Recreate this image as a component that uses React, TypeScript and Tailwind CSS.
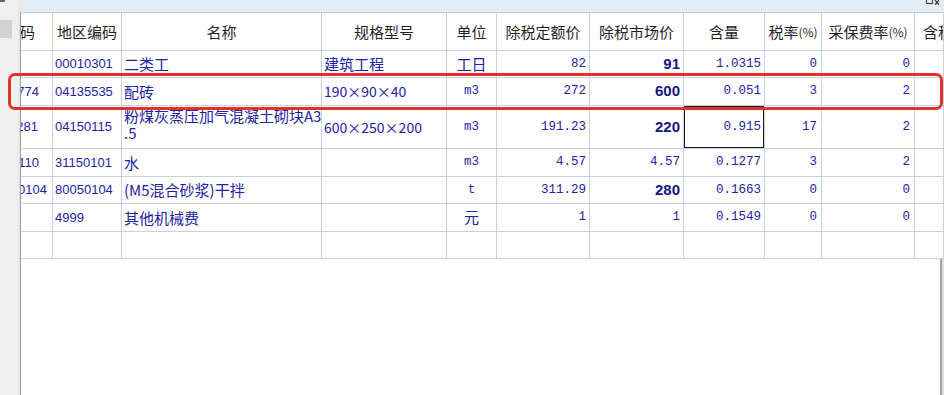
import React from "react";

type Row = {
  lead: string;
  leadPad: string;
  code: string;
  name: React.ReactNode;
  spec: string;
  specCjk?: boolean;
  unit: string;
  unitCjk?: boolean;
  quota: string;
  market: string;
  marketBold?: boolean;
  content: string;
  tax: string;
  fee: string;
  selected?: boolean;
  tall?: boolean;
};

const rows: Row[] = [
  { lead: "", leadPad: "pr-[13px]", code: "00010301", name: "二类工", spec: "建筑工程", specCjk: true, unit: "工日", unitCjk: true, quota: "82", market: "91", marketBold: true, content: "1.0315", tax: "0", fee: "0" },
  { lead: "9774", leadPad: "pr-[13px]", code: "04135535", name: "配砖", spec: "190×90×40", unit: "m3", quota: "272", market: "600", marketBold: true, content: "0.051", tax: "3", fee: "2" },
  {
    lead: "0281",
    leadPad: "pr-[14px]",
    code: "04150115",
    name: (
      <>
        粉煤灰蒸压加气混凝土砌块A3
        <br />
        .5
      </>
    ),
    spec: "600×250×200",
    unit: "m3",
    quota: "191.23",
    market: "220",
    marketBold: true,
    content: "0.915",
    tax: "17",
    fee: "2",
    selected: true,
    tall: true,
  },
  { lead: "1.110", leadPad: "pr-[13px]", code: "31150101", name: "水", spec: "", unit: "m3", quota: "4.57", market: "4.57", content: "0.1277", tax: "3", fee: "2" },
  { lead: "00104", leadPad: "pr-[5px]", code: "80050104", name: "(M5混合砂浆)干拌", spec: "", unit: "t", quota: "311.29", market: "280", marketBold: true, content: "0.1663", tax: "0", fee: "0" },
  { lead: "", leadPad: "pr-[13px]", code: "4999", name: "其他机械费", spec: "", unit: "元", unitCjk: true, quota: "1", market: "1", content: "0.1549", tax: "0", fee: "0" },
];

const cell = "border-r border-b border-[#c9d1e0] overflow-hidden whitespace-nowrap flex items-center";
const cjk = "font-['Noto_Sans_CJK_SC',sans-serif]";
const mono = "font-['Liberation_Mono','Noto_Sans_CJK_SC',monospace] text-[12.5px]";
const sans = "font-['Liberation_Sans','Noto_Sans_CJK_SC',sans-serif]";

function Header() {
  const h = `${cell} justify-center ${cjk} text-[15px] leading-[18px] text-[#1f1f1f]`;
  return (
    <>
      <div className={`${cell} justify-end pr-[17px] ${cjk} text-[15px] leading-[18px] text-[#1f1f1f]`}>编码</div>
      <div className={h}>地区编码</div>
      <div className={h}>名称</div>
      <div className={h}>规格型号</div>
      <div className={h}>单位</div>
      <div className={h}>除税定额价</div>
      <div className={h}>除税市场价</div>
      <div className={h}>含量</div>
      <div className={h}>
        税率<span className="text-[12px]">(%)</span>
      </div>
      <div className={h}>
        采保费率<span className="text-[12px]">(%)</span>
      </div>
      <div className={`${h} !justify-start pl-[8px]`}>含税市场价</div>
    </>
  );
}

function DataRow({ r }: { r: Row }) {
  const blue = "text-[#1e22a3]";
  const num = `${cell} justify-end pr-[3px] ${mono} ${blue}`;
  return (
    <>
      <div className={`${cell} justify-end ${r.leadPad} ${sans} text-[13px] ${blue}`}>{r.lead}</div>
      <div className={`${cell} pl-[2px] ${sans} text-[13px] ${blue}`}>{r.code}</div>
      <div
        className={`${cell} pl-[2px] ${cjk} text-[15px] ${blue} ${
          r.tall ? "!items-start leading-[17px] pt-[1px]" : "leading-[18px]"
        }`}
      >
        <div>{r.name}</div>
      </div>
      <div className={`${cell} pl-[2px] ${blue} ${cjk} ${r.specCjk ? "text-[15px]" : "text-[14px]"}`}>{r.spec}</div>
      <div className={`${cell} justify-center ${blue} ${r.unitCjk ? `${cjk} text-[15px]` : mono}`}>{r.unit}</div>
      <div className={num}>{r.quota}</div>
      <div
        className={
          r.marketBold
            ? `${cell} justify-end pr-[3px] ${sans} text-[15px] font-bold text-[#16167e]`
            : num
        }
      >
        {r.market}
      </div>
      <div className={`${num} ${r.selected ? "shadow-[inset_0_0_0_1px_#1a1a1a]" : ""}`}>{r.content}</div>
      <div className={`${num} pr-[4px]`}>{r.tax}</div>
      <div className={`${num} pr-[4px]`}>{r.fee}</div>
      <div className={cell} />
    </>
  );
}

export default function App() {
  return (
    <div className="relative flex h-[395px] w-[944px] overflow-hidden bg-white">
      {/* left side panel */}
      <div className="flex w-[20px] shrink-0">
        <div className="flex w-[18px] flex-col bg-[#efefef]">
          <div className="h-[2px] w-[5px] bg-[#666]" />
          <div className="mt-[18px] h-[18px] w-[12px] bg-[#d2d2d2]" />
        </div>
        <div className="w-[2px] bg-[#e7e9eb]" />
      </div>

      <div className="flex flex-1 flex-col">
        {/* top band */}
        <div className="flex h-[12px] justify-end bg-[#e3ebf3] pr-[2px]">
          <svg width="16" height="5" viewBox="0 0 16 5" className="mr-[1px]">
            <path d="M1.5 0 V3.5 H7.5 V0" fill="none" stroke="#333" strokeWidth="1" />
            <path d="M10 0 L12 2.5 L14 0 M12 2.5 L10 4.5 M12 2.5 L14 4.5" fill="none" stroke="#333" strokeWidth="1.2" />
          </svg>
        </div>

        {/* grid */}
        <div className="flex flex-1 flex-col border-l border-[#9b9b9b]">
          <div className="grid grid-cols-[32px_69px_200px_125px_50px_93px_94px_81px_57px_93px_1fr] grid-rows-[38px_27px_28px_43px_28px_27px_28px_27px] border-t border-[#c9d1e0]">
            <Header />
            {rows.map((r, i) => (
              <DataRow key={i} r={r} />
            ))}
            {Array.from({ length: 11 }).map((_, i) => (
              <div key={i} className={cell} />
            ))}
          </div>
          <div className="flex flex-1 justify-end">
            <div className="w-[2px] bg-[#a3a3a3]" />
            <div className="w-[2px] bg-[#dcdcdc]" />
          </div>
        </div>
      </div>

      {/* red annotation box */}
      <div className="pointer-events-none absolute left-[8px] top-[73px] h-[37px] w-[935px] rounded-[7px] border-[3px] border-[#e8302b]" />
    </div>
  );
}
